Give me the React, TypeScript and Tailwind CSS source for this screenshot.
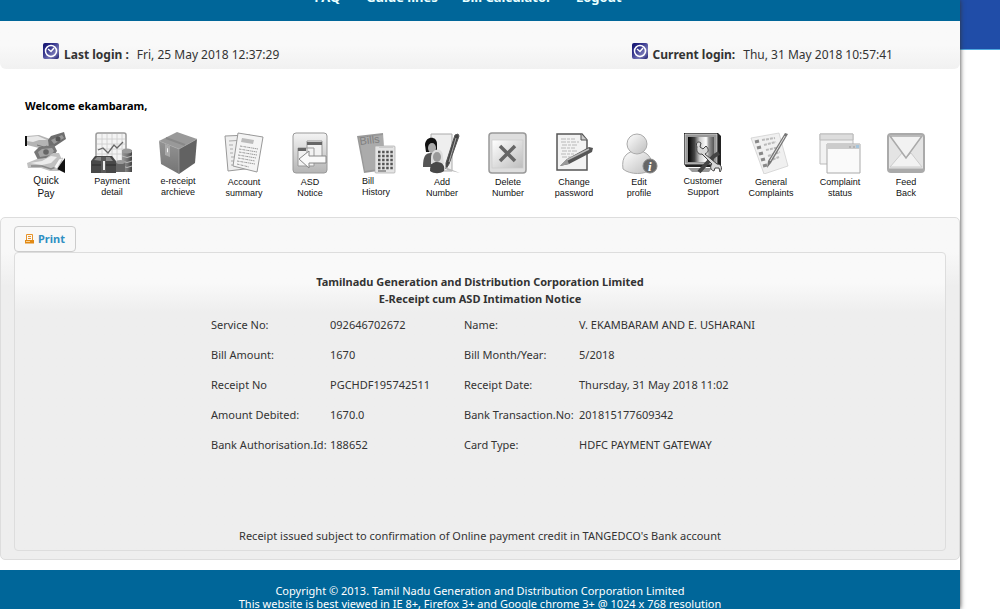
import type { ReactNode } from 'react';

const navLinks = [
  { label: 'FAQ', gap: 'mr-[26px]' },
  { label: 'Guide lines', gap: 'mr-6' },
  { label: 'Bill Calculator', gap: 'mr-6' },
  { label: 'Logout', gap: '' },
];

function Drawing({ children }: { children: ReactNode }) {
  return (
    <svg viewBox="0 0 42 42" className="block size-[42px]" aria-hidden="true">
      {children}
    </svg>
  );
}

function Defs() {
  return (
    <svg className="absolute size-0" aria-hidden="true">
      <defs>
        <linearGradient id="light" x1="0" y1="0" x2="1" y2="1">
          <stop offset="0" stopColor="#fff" />
          <stop offset="1" stopColor="#bdbdbd" />
        </linearGradient>
        <linearGradient id="tile" x1="0" y1="0" x2="0" y2="1">
          <stop offset="0" stopColor="#f4f4f4" />
          <stop offset="1" stopColor="#b4b4b4" />
        </linearGradient>
        <linearGradient id="mid" x1="0" y1="0" x2="1" y2="0">
          <stop offset="0" stopColor="#999" />
          <stop offset="0.5" stopColor="#777" />
          <stop offset="1" stopColor="#444" />
        </linearGradient>
        <linearGradient id="side" x1="0" y1="0" x2="0" y2="1">
          <stop offset="0" stopColor="#949494" />
          <stop offset="1" stopColor="#747474" />
        </linearGradient>
        <linearGradient id="screen" x1="0" y1="0" x2="1" y2="0">
          <stop offset="0" stopColor="#000" />
          <stop offset="0.25" stopColor="#444" />
          <stop offset="0.45" stopColor="#ccc" />
          <stop offset="0.7" stopColor="#fff" />
          <stop offset="0.8" stopColor="#999" />
          <stop offset="1" stopColor="#555" />
        </linearGradient>
        <linearGradient id="clock" x1="0" y1="0" x2="1" y2="1">
          <stop offset="0" stopColor="#10106e" />
          <stop offset="0.35" stopColor="#34348c" />
          <stop offset="0.7" stopColor="#7a7ab8" />
          <stop offset="1" stopColor="#18186c" />
        </linearGradient>
      </defs>
    </svg>
  );
}

const QuickPay = () => (
  <Drawing>
    <path d="M0 4h2v10H0z" fill="#111" />
    <path d="M2 4l12-1 11 4 3 4-2 6-5-3-7 2-12-3z" fill="#b4b4b4" />
    <path d="M2 5l11-1 9 4-8 0-6 2-6-1z" fill="#e8e8e8" />
    <path d="M12 13l7 2 3-1" stroke="#777" fill="none" />
    <path d="M23 8l3-4L39 0l2 7-12 8-5 0z" fill="#6e6e6e" />
    <path d="M26 8l11-5 2 3-10 6z" fill="#999" />
    <circle cx="33" cy="7" r="2.500" fill="#555" />
    <path d="M9 20l5-5 15-2 3 6-4 6-15 3z" fill="#777" />
    <path d="M13 20l4-3 10-1 2 3-3 4-11 2z" fill="#a4a4a4" />
    <circle cx="21" cy="20" r="2.800" fill="#666" />
    <path d="M2 31l10-4 9-1 7-5 6 0 4 9-4 9-9 0-9-3-13 0z" fill="#c0c0c0" />
    <path d="M5 31l12-2 9-5 6 1-6 6-9 2z" fill="#ececec" />
    <path d="M6 34l11 0 9 3 5-2" stroke="#888" fill="none" strokeWidth="1.500" />
    <path d="M32 37l8-11v15z" fill="#111" />
    <path d="M29 35l5-8 4-1-6 11z" fill="#f6f6f6" stroke="#aaa" strokeWidth=".5" />
  </Drawing>
);

const Payment = () => (
  <Drawing>
    <rect x="5" y="1" width="30" height="31" rx="2" fill="#f4f4f4" stroke="#999" strokeWidth="1.500" />
    <path d="M6 7h28M6 12h28M6 17h28M6 22h28M11 2v29M16 2v29M21 2v29M26 2v29M31 2v29" stroke="#ccc" strokeWidth=".8" />
    <path d="M7 18l5-2 5 5 6-8 3 3 6-6" stroke="#666" strokeWidth="1.300" fill="none" />
    <path d="M31 18h10v22H31z" fill="url(#mid)" />
    <path d="M31 24q5 3 10 0M31 29q5 3 10 0M31 34q5 3 10 0" stroke="#bbb" fill="none" />
    <ellipse cx="36" cy="19" rx="5" ry="2.500" fill="#9a9a9a" />
    <path d="M25 30h9v10h-9z" fill="#666" />
    <ellipse cx="29.500" cy="30" rx="4.500" ry="2" fill="#999" />
    <path d="M0 29l4-5h17l4 5v12H0z" fill="#484848" />
    <path d="M3 28l3-3h5v4zM15 25h4l3 4h-7z" fill="#888" />
    <path d="M10 25h5v16h-5z" fill="#5a5a5a" />
    <path d="M12 29h2v9h-2z" fill="#eee" />
    <path d="M1 33h9M15 33h10" stroke="#2a2a2a" />
  </Drawing>
);

const Box = () => (
  <Drawing>
    <path d="M2 9L20 0l20 7-18 10z" fill="#999" />
    <path d="M2 9l20 8v25L4 32z" fill="url(#side)" />
    <path d="M22 17L40 7l-2 24-16 11z" fill="#626262" />
    <path d="M9 6l19 7" stroke="#888" strokeWidth="2" />
    <path d="M8 12l5 2v11l-5-2z" fill="#aaa" />
    <path d="M10 16l1 .4v4l-1-.4z" fill="#f4f4f4" />
    <path d="M2 9l20 8L40 7M22 17v25" stroke="#a8a8a8" strokeWidth=".6" fill="none" />
  </Drawing>
);

const Account = () => (
  <Drawing>
    <path d="M2 4l25-1 3 33-25 3z" fill="#eee" stroke="#999" />
    <path d="M6 9l16-1M6 13l4 0M7 17h3M7 21h3M8 25h3M8 29h3M8 33h3" stroke="#aaa" />
    <path d="M15 1l25 4-6 35-24-6z" fill="#f4f4f4" stroke="#999" />
    <path d="M19 6l12 2-1 4-12-2z" fill="#bbb" />
    <path d="M17 14l18 3M16 17l18 3M16 20l18 3M15 23l18 3M15 26l17 3M14 29l18 3M14 32l12 3" stroke="#999" strokeDasharray="2 .6 1 .6" />
  </Drawing>
);

const Asd = () => (
  <Drawing>
    <rect x="4" y="1" width="34" height="40" rx="3" fill="url(#tile)" stroke="#999" />
    <path d="M9 16h16v18H9zM18 9h15v16H18z" fill="#f2f2f2" stroke="#999" />
    <path d="M18 10h15v3H18zM9 16h8v3H9z" fill="#666" />
    <path d="M10 27l10-8v5h17v7H20v5z" fill="#fafafa" stroke="#888" />
  </Drawing>
);

const BillHistory = () => (
  <Drawing>
    <path d="M2 4l26-3 2 37-21 3z" fill="#999" />
    <path d="M4 6l24-3 1 33-19 3z" fill="#ababab" />
    <text x="5" y="13" fontSize="11" fontFamily="Liberation Sans, sans-serif" fill="#808080" transform="rotate(-7 5 13)">Bills</text>
    <rect x="20" y="14" width="20" height="27" rx="1" fill="#e4e4e4" stroke="#aaa" strokeWidth=".7" />
    <path d="M24 15h14" stroke="#ccc" strokeWidth="2" />
    <path d="M23 20h15M23 24h15M23 28h15M23 32h15M23 36h15" stroke="#555" strokeWidth="2.600" strokeDasharray="2.500 1.600" />
    <path d="M23 39h8" stroke="#555" strokeWidth="1" />
  </Drawing>
);

const AddNumber = () => (
  <Drawing>
    <path d="M10 2h21v37H10z" fill="#eee" stroke="#aaa" />
    <path d="M4 13c0-9 12-10 12-1v8H5z" fill="#111" />
    <ellipse cx="11" cy="16" rx="4" ry="5" fill="#aaa" />
    <path d="M2 35c0-10 2-14 8-14s7 6 6 14z" fill="#555" />
    <path d="M10 26c0-10 12-12 12-1l1 7H10z" fill="#ddd" />
    <ellipse cx="16" cy="25" rx="4" ry="5" fill="#999" />
    <path d="M9 39c0-7 3-9 7-9 6 0 8 4 7 9-4 3-10 3-14 0z" fill="#484848" />
    <path d="M34 3l3-1 1 2-10 28-3 5v-6z" fill="#444" stroke="#555" />
    <path d="M35 6L28 30" stroke="#aaa" />
    <path d="M24 35l15 6-13-3z" fill="#bbb" />
  </Drawing>
);

const DeleteNumber = () => (
  <Drawing>
    <rect x="2" y="1" width="37" height="40" rx="3" fill="#dedede" stroke="#999" strokeWidth="1.500" />
    <rect x="5" y="8" width="31" height="28" fill="url(#light)" stroke="#ccc" strokeWidth=".7" />
    <path d="M13 14l15 15M28 14L13 29" stroke="#666" strokeWidth="3.500" />
  </Drawing>
);

const Password = () => (
  <Drawing>
    <path d="M4 2h25l5 6v30H4z" fill="#f2f2f2" stroke="#555" strokeWidth="1.500" />
    <path d="M28 2v6h6" fill="#ccc" stroke="#555" />
    <path d="M8 7h14M8 10h18M9 13h16M8 16h14M9 19h16M8 22h13M9 25h10" stroke="#ccc" strokeWidth="1.500" strokeDasharray="5 1 3 1" />
    <path d="M7 34l7-7 22-12 4 1-1 4-23 12z" fill="#555" />
    <path d="M14 28l22-11" stroke="#bbb" strokeWidth="1.500" />
    <path d="M7 34l7-7 2 5z" fill="#999" />
  </Drawing>
);

const Profile = () => (
  <Drawing>
    <path d="M5 37c-2-13 5-18 14-18s16 5 15 18c-7 6-22 6-29 0z" fill="url(#light)" stroke="#aaa" />
    <circle cx="19" cy="12" r="10" fill="url(#light)" stroke="#aaa" />
    <circle cx="32" cy="34" r="7" fill="#666" stroke="#888" />
    <text x="30" y="39" fontSize="13" fontWeight="bold" fontStyle="italic" fontFamily="Liberation Serif, serif" fill="#fff">i</text>
  </Drawing>
);

const Support = () => (
  <Drawing>
    <path d="M2 1h34l3 3v31H4l-2-3z" fill="#222" />
    <path d="M3 2h32v30H3z" fill="#999" stroke="#eee" strokeWidth=".6" />
    <path d="M6 5h26v25H6z" fill="url(#screen)" />
    <path d="M6 36h24l-3 4H10z" fill="#999" />
    <path d="M17 40l8-9 7-7 5-3" stroke="#444" strokeWidth="4" fill="none" />
    <path d="M15 15c-2-5 2-6 4-4l-1 4 3 2 3-3c3 3 3 6-1 8l12 10c4 0 6 4 3 8l-1-4-4 0-1 3c-4-1-4-5-2-7L20 22c-3 1-6-2-5-7z" fill="#d8d8d8" stroke="#444" />
  </Drawing>
);

const General = () => (
  <Drawing>
    <path d="M1 6l28-5 9 33-24 8z" fill="#f0f0f0" stroke="#ccc" strokeWidth=".7" />
    <path d="M5 10l4-1M7 16l4-1M9 22l4-1M11 28l4-1M13 34l4-1" stroke="#888" strokeWidth="3" />
    <path d="M12 8l13-2M14 13l12-3M16 18l14-3M18 24l12-4M19 29l10-4" stroke="#bbb" strokeWidth="2" strokeDasharray="3 1" />
    <path d="M35 1l3 1-17 29-4 5 1-7z" fill="#777" />
    <path d="M35 4L20 29" stroke="#ddd" />
  </Drawing>
);

const Complaint = () => (
  <Drawing>
    <path d="M1 2h33v30H1z" fill="#f2f2f2" stroke="#bbb" />
    <path d="M1 2h33v6H1z" fill="#ddd" stroke="#bbb" />
    <path d="M8 12h33v29H8z" fill="#fafafa" stroke="#aaa" />
    <path d="M8 12h33v5H8z" fill="#ccc" />
    <path d="M37 13h3v3h-3z" fill="#a5c5dc" />
    <path d="M30 15h2M34 15h2" stroke="#999" />
  </Drawing>
);

const Feedback = () => (
  <Drawing>
    <rect x="3" y="2" width="36" height="38" rx="3" fill="#e4e4e4" stroke="#aaa" strokeWidth="2" />
    <path d="M5 35l12-14 4 5 5-5 11 14z" fill="#f2f2f2" stroke="#ccc" />
    <path d="M5 4l16 22L37 4z" fill="#f2f2f2" stroke="#aaa" strokeWidth="1.500" />
    <path d="M4 38h34" stroke="#aaa" strokeWidth="3" />
  </Drawing>
);

const shortcuts = [
  { Icon: QuickPay, lines: ['Quick', 'Pay'], cell: 'w-[66px]', text: 'text-[10px] leading-[13px] text-center' },
  { Icon: Payment, lines: ['Payment', 'detail'], cell: 'w-[66px]', text: 'mt-[2px] text-center' },
  { Icon: Box, lines: ['e-receipt', 'archieve'], cell: 'w-[66px]', text: 'mt-[2px] text-center' },
  { Icon: Account, lines: ['Account', 'summary'], cell: 'w-[66px]', text: 'mt-[3px] text-center' },
  { Icon: Asd, lines: ['ASD', 'Notice'], cell: 'w-[66px]', text: 'mt-[3px] text-center' },
  { Icon: BillHistory, lines: ['Bill', 'History'], cell: 'w-[66px]', text: 'mt-[2px] text-left' },
  { Icon: AddNumber, lines: ['Add', 'Number'], cell: 'w-[66px]', text: 'mt-[3px] text-center' },
  { Icon: DeleteNumber, lines: ['Delete', 'Number'], cell: 'w-[66px]', text: 'mt-[3px] text-center' },
  { Icon: Password, lines: ['Change', 'password'], cell: 'w-[66px]', text: 'mt-[3px] text-center' },
  { Icon: Profile, lines: ['Edit', 'profile'], cell: 'w-16', text: 'mt-[3px] text-center' },
  { Icon: Support, lines: ['Customer', 'Support'], cell: 'w-16', text: 'mt-[2px] text-center' },
  { Icon: General, lines: ['General', 'Complaints'], cell: 'w-[72px]', text: 'mt-[3px] text-center' },
  { Icon: Complaint, lines: ['Complaint', 'status'], cell: 'w-[66px]', text: 'mt-[3px] text-center' },
  { Icon: Feedback, lines: ['Feed', 'Back'], cell: 'w-[66px]', text: 'mt-[3px] text-center' },
];

const details = [
  ['Service No:', '092646702672', 'Name:', 'V. EKAMBARAM AND E. USHARANI'],
  ['Bill Amount:', '1670', 'Bill Month/Year:', '5/2018'],
  ['Receipt No', 'PGCHDF195742511', 'Receipt Date:', 'Thursday, 31 May 2018 11:02'],
  ['Amount Debited:', '1670.0', 'Bank Transaction.No:', '201815177609342'],
  ['Bank Authorisation.Id:', '188652', 'Card Type:', 'HDFC PAYMENT GATEWAY'],
];

function LoginTime({ label, value }: { label: string; value: string }) {
  return (
    <div className="flex items-start text-[12px] leading-4 text-[#333]">
      <svg viewBox="0 0 16 16" className="mr-[5px] size-4" aria-hidden="true">
        <rect width="16" height="16" rx="2" fill="url(#clock)" />
        <circle cx="8" cy="8" r="5.500" fill="none" stroke="#fff" strokeWidth="1.500" />
        <path d="M5 6l3 2.500L11 5" fill="none" stroke="#fff" strokeWidth="1.400" />
      </svg>
      <b className="mt-1 mr-2">{label}</b>
      <span className="mt-1">{value}</span>
    </div>
  );
}

export default function App() {
  return (
    <div className="flex h-screen overflow-hidden bg-white font-['Noto_Sans',sans-serif] text-[11px] text-[#333]">
      <Defs />
      <div className="z-10 flex min-w-0 flex-1 flex-col bg-white shadow-[0_0_5px_#333]">
        <nav className="flex h-[21px] shrink-0 items-start justify-center overflow-hidden bg-[#006699] pr-6">
          {navLinks.map((link) => (
            <a key={link.label} href="#" className={`-mt-[13px] text-[13px] leading-5 font-bold text-[#e8ffff] ${link.gap}`}>
              {link.label}
            </a>
          ))}
        </nav>

        <header className="flex h-12 shrink-0 justify-between rounded-b-md bg-linear-to-b from-[#f9f9f9] from-50% to-[#f1f1f1] pt-[22px] pr-[67px] pl-[43px]">
          <LoginTime label="Last login :" value="Fri, 25 May 2018 12:37:29" />
          <LoginTime label="Current login:" value="Thu, 31 May 2018 10:57:41" />
        </header>

        <h1 className="mt-[29px] ml-[25px] shrink-0 text-[11px] leading-4 font-bold text-black">Welcome ekambaram,</h1>

        <div className="mt-[18px] flex h-[68px] shrink-0 pl-[13px]">
          {shortcuts.map(({ Icon, lines, cell, text }) => (
            <a
              key={lines.join(' ')}
              href="#"
              className={`flex shrink-0 flex-col items-center font-['Liberation_Sans',sans-serif] text-[9px] leading-[11px] text-[#111] ${cell}`}
            >
              <Icon />
              <span className={text}>
                {lines[0]}
                <br />
                {lines[1]}
              </span>
            </a>
          ))}
        </div>

        <main className="mt-[17px] shrink-0 rounded-[5px] border border-[#ddd] bg-linear-to-b from-[#f8f8f8] from-10% to-[#eee] to-20% px-[13px] pt-2 pb-2">
          <button
            type="button"
            className="flex h-[26px] items-center rounded-[4px] border border-[#ccc] bg-[#f8f8f8] px-[10px] text-[11px] font-bold text-[#2e8fc2]"
          >
            <svg viewBox="0 0 9 10" className="mr-1 h-[10px] w-[9px]" aria-hidden="true">
              <path d="M1.500 6V.5h6V6M3 2.500h3M3 4.500h3" fill="none" stroke="#e8942a" />
              <path d="M0 6h9v3.500H0z" fill="#e28a14" />
              <path d="M1 7.500h4" stroke="#f6cf95" />
            </svg>
            Print
          </button>
          <section className="rounded-[4px] border border-[#ddd] bg-linear-to-b from-[#f9f9f9] from-10% to-[#eee] to-20% pt-5 pb-1">
            <h2 className="text-center text-[11px] leading-[17px] font-bold">
              Tamilnadu Generation and Distribution Corporation Limited
              <br />
              E-Receipt cum ASD Intimation Notice
            </h2>
            <table className="mx-auto mt-[3px] w-[538px] table-fixed border-collapse">
              <tbody>
                {details.map((row) => (
                  <tr key={row[0]} className="h-[30px]">
                    <th scope="row" className="w-[119px] p-0 text-left font-normal whitespace-nowrap">{row[0]}</th>
                    <td className="w-[134px] p-0">{row[1]}</td>
                    <th scope="row" className="w-[115px] p-0 text-left font-normal whitespace-nowrap">{row[2]}</th>
                    <td className="p-0 whitespace-nowrap">{row[3]}</td>
                  </tr>
                ))}
              </tbody>
            </table>
            <p className="mt-[66px] text-center leading-5">
              Receipt issued subject to confirmation of Online payment credit in TANGEDCO's Bank account
            </p>
          </section>
        </main>

        <footer className="mt-[10px] flex-1 bg-[#006699] pt-[14px] text-center text-[11px] leading-[13px] text-white">
          <p>Copyright © 2013. Tamil Nadu Generation and Distribution Corporation Limited</p>
          <p>This website is best viewed in IE 8+, Firefox 3+ and Google chrome 3+ @ 1024 x 768 resolution</p>
        </footer>
      </div>
      <div className="w-10 shrink-0">
        <div className="h-[50px] border-b border-[#4fa8e0] bg-[#204da8]" />
      </div>
    </div>
  );
}
